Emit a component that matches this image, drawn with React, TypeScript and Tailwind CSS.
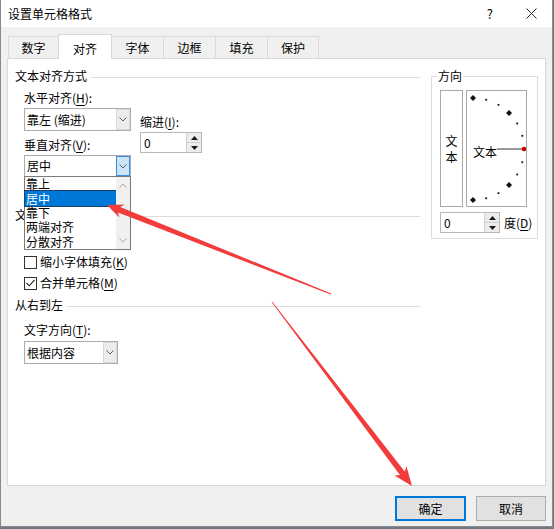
import React from "react";

type Pt = [number, number];

function arrowPoints(tail: Pt, tip: Pt, w0: number, w1: number, headLen: number, headW: number) {
  const dx = tip[0] - tail[0];
  const dy = tip[1] - tail[1];
  const len = Math.hypot(dx, dy);
  const ux = dx / len;
  const uy = dy / len;
  const nx = -uy;
  const ny = ux;
  const bx = tip[0] - ux * headLen;
  const by = tip[1] - uy * headLen;
  const sx = bx + ux * 3;
  const sy = by + uy * 3;
  const pts: Pt[] = [
    [tail[0] + (nx * w0) / 2, tail[1] + (ny * w0) / 2],
    [sx + (nx * w1) / 2, sy + (ny * w1) / 2],
    [bx + (nx * headW) / 2, by + (ny * headW) / 2],
    tip,
    [bx - (nx * headW) / 2, by - (ny * headW) / 2],
    [sx - (nx * w1) / 2, sy - (ny * w1) / 2],
    [tail[0] - (nx * w0) / 2, tail[1] - (ny * w0) / 2],
  ];
  return pts.map((p) => `${p[0].toFixed(1)},${p[1].toFixed(1)}`).join(" ");
}

function U({ children }: { children: React.ReactNode }) {
  return <span className="underline underline-offset-2">{children}</span>;
}

function Chevron({ up = false }: { up?: boolean }) {
  return (
    <svg width="8" height="5" viewBox="0 0 8 5" className={up ? "rotate-180" : ""}>
      <polyline points="0.5,0.5 4,4 7.5,0.5" fill="none" stroke="#606060" strokeWidth="1" />
    </svg>
  );
}

function Combo({
  value,
  width,
  height = 23,
  active = false,
  children,
}: {
  value: string;
  width: string;
  height?: number;
  active?: boolean;
  children?: React.ReactNode;
}) {
  return (
    <div
      className={`relative flex ${width} border border-[#adadad] bg-white ${
        height === 22 ? "h-[22px]" : "h-[23px]"
      }`}
    >
      <span className="flex flex-1 items-center pl-[2px]">{value}</span>
      <div
        className={`flex w-[14px] items-center justify-center border ${
          active ? "border-[#3c8ee0] bg-[#cce4f7]" : "border-[#d9d9d9] bg-[#ececec]"
        }`}
      >
        <Chevron />
      </div>
      {children}
    </div>
  );
}

function Spinner({ width }: { width: string }) {
  return (
    <div className={`flex h-[21px] ${width} border border-[#b9b9b9] bg-white`}>
      <span className="flex flex-1 items-center pl-[3px]">0</span>
      <div className="flex w-[15px] flex-col border-l border-[#d0d0d0]">
        <div className="flex flex-1 items-center justify-center border-b border-[#d0d0d0] bg-[#ececec]">
          <svg width="7" height="4" viewBox="0 0 7 4">
            <polygon points="0,4 3.5,0 7,4" fill="#1a1a1a" />
          </svg>
        </div>
        <div className="flex flex-1 items-center justify-center bg-[#ececec]">
          <svg width="7" height="4" viewBox="0 0 7 4">
            <polygon points="0,0 3.5,4 7,0" fill="#1a1a1a" />
          </svg>
        </div>
      </div>
    </div>
  );
}

function Checkbox({ checked, children }: { checked?: boolean; children: React.ReactNode }) {
  return (
    <div className="flex h-[14px] items-center gap-[3px] pl-[9px]">
      <div className="flex h-[13px] w-[13px] items-center justify-center border border-[#333333] bg-white">
        {checked ? (
          <svg width="9" height="8" viewBox="0 0 9 8">
            <polyline points="0.5,4 3.3,6.8 8.5,0.8" fill="none" stroke="#222" strokeWidth="1.1" />
          </svg>
        ) : null}
      </div>
      <span>{children}</span>
    </div>
  );
}

function SectionHeader({ title, mt }: { title: string; mt: string }) {
  return (
    <div className={`flex h-[14px] items-center gap-[4px] ${mt}`}>
      <span>{title}</span>
      <div className="mt-[3px] h-px flex-1 bg-[#dcdcdc]" />
    </div>
  );
}

const tabs = [
  { label: "数字", w: "w-[51px]" },
  { label: "对齐", w: "w-[54px]", active: true },
  { label: "字体", w: "w-[53px]" },
  { label: "边框", w: "w-[53px]" },
  { label: "填充", w: "w-[53px]" },
  { label: "保护", w: "w-[52px]" },
];

const listItems = ["靠上", "居中", "靠下", "两端对齐", "分散对齐"];

const dots = [90, 75, 60, 45, 30, 15, 0, -15, -30, -45, -60, -75, -90];

export default function App() {
  const cx = 6;
  const cy = 58;
  const r = 51;

  return (
    <div className="relative h-[529px] w-[554px] overflow-hidden bg-[#6f7a84] font-['Noto_Sans_CJK_SC','Noto_Sans',sans-serif] text-[12px] leading-[14px] text-black">
      <div className="flex h-[527px] w-[553px] flex-col border-x border-b border-[#8a8a8a] bg-[#f0f0f0]">
        {/* title bar */}
        <div className="flex h-[27px] items-center bg-white pl-[7px]">
          <span className="flex-1">设置单元格格式</span>
          <span className="mr-[33px] text-[13px]">?</span>
          <svg width="11" height="11" viewBox="0 0 11 11" className="mr-[15px]">
            <path d="M0.5 0.5 L10.5 10.5 M10.5 0.5 L0.5 10.5" stroke="#222" strokeWidth="1" />
          </svg>
        </div>

        <div className="flex flex-1 flex-col px-[6px]">
          {/* tabs */}
          <div className="mt-[7px] flex items-end pl-[1px]">
            {tabs.map((t, i) => (
              <div
                key={t.label}
                className={`flex justify-center border border-b-0 border-[#d9d9d9] ${t.w} ${
                  i > 0 ? "-ml-px" : ""
                } ${
                  t.active
                    ? "relative z-10 -mb-px h-[25px] items-center bg-white pt-[3px]"
                    : "h-[22px] items-center bg-[#f0f0f0] pt-[1px]"
                }`}
              >
                {t.label}
              </div>
            ))}
          </div>

          {/* panel */}
          <div className="flex h-[428px] gap-[11px] border border-[#d9d9d9] bg-white pl-[7px] pt-[10px]">
            {/* left column */}
            <div className="flex w-[405px] flex-col">
              <SectionHeader title="文本对齐方式" mt="mt-0" />
              <div className="flex gap-[9px] pl-[9px]">
                <div className="flex w-[107px] flex-col">
                  <span className="mt-[8px]">
                    水平对齐(<U>H</U>):
                  </span>
                  <div className="mt-[3px]">
                    <Combo value="靠左 (缩进)" width="w-[107px]" />
                  </div>
                  <span className="mt-[7px]">
                    垂直对齐(<U>V</U>):
                  </span>
                  <div className="mt-[3px]">
                    <Combo value="居中" width="w-[107px]" height={22} active>
                      <div className="absolute left-[-1px] top-[20px] z-20 flex h-[74px] w-[107px] border border-[#7a7a7a] bg-white">
                        <div className="flex w-[91px] flex-col">
                          {listItems.map((item, i) => (
                            <div
                              key={item}
                              className={`flex h-[14.7px] items-center pl-[1px] ${
                                i === 1 ? "bg-[#0078d7] text-white outline outline-1 outline-[#1f3f66]" : ""
                              }`}
                            >
                              {item}
                            </div>
                          ))}
                        </div>
                        <div className="flex flex-1 flex-col items-center justify-between bg-[#f0f0f0] py-[6px]">
                          <div className="opacity-50">
                            <Chevron up />
                          </div>
                          <div className="opacity-50">
                            <Chevron />
                          </div>
                        </div>
                      </div>
                    </Combo>
                  </div>
                </div>
                <div className="flex flex-col">
                  <span className="mt-[32px]">
                    缩进(<U>I</U>):
                  </span>
                  <div className="mt-[3px]">
                    <Spinner width="w-[62px]" />
                  </div>
                </div>
              </div>

              <SectionHeader title="文本控制" mt="mt-[31px]" />
              <div className="mt-[33px]">
                <Checkbox>
                  缩小字体填充(<U>K</U>)
                </Checkbox>
              </div>
              <div className="mt-[7px]">
                <Checkbox checked>
                  合并单元格(<U>M</U>)
                </Checkbox>
              </div>

              <SectionHeader title="从右到左" mt="mt-[8px]" />
              <div className="flex flex-col pl-[9px]">
                <span className="mt-[11px]">
                  文字方向(<U>T</U>):
                </span>
                <div className="mt-[4px]">
                  <Combo value="根据内容" width="w-[94px]" />
                </div>
              </div>
            </div>

            {/* orientation group */}
            <div className="relative mt-[7px] h-[163px] w-[107px] border border-[#dcdcdc] pl-[8px] pt-[13px]">
              <span className="absolute left-[5px] top-[-8px] bg-white px-[1px]">方向</span>
              <div className="flex gap-[3px]">
                <div className="flex h-[117px] w-[23px] flex-col items-center justify-center border border-[#a8a8a8] leading-[16px]">
                  <span>文</span>
                  <span>本</span>
                </div>
                <div className="relative h-[117px] w-[61px] border border-[#a8a8a8]">
                  <svg width="59" height="115" viewBox="0 0 59 115" className="absolute left-0 top-0">
                    <line x1="30" y1={cy} x2="56" y2={cy} stroke="#555" strokeWidth="1.2" />
                    {dots.map((a) => {
                      const rad = (a * Math.PI) / 180;
                      const x = cx + r * Math.cos(rad);
                      const y = cy - r * Math.sin(rad);
                      if (a === 0) return <circle key={a} cx={x} cy={y} r="2.3" fill="#c00000" />;
                      const big = Math.abs(a) === 90 || Math.abs(a) === 45;
                      const s = big ? 4.2 : 1.8;
                      return (
                        <rect
                          key={a}
                          x={x - s / 2}
                          y={y - s / 2}
                          width={s}
                          height={s}
                          fill="#111"
                          transform={big ? `rotate(45 ${x} ${y})` : undefined}
                        />
                      );
                    })}
                  </svg>
                  <span className="absolute left-[6px] top-[54px]">文本</span>
                </div>
              </div>
              <div className="mt-[5px] flex items-center gap-[4px]">
                <Spinner width="w-[60px]" />
                <span>
                  度(<U>D</U>)
                </span>
              </div>
            </div>
          </div>

          {/* buttons */}
          <div className="mt-[10px] flex justify-end gap-[10px]">
            <button className="flex h-[25px] w-[71px] items-center justify-center border border-[#0078d7] bg-[#e1e1e1] shadow-[inset_0_0_0_1px_#0078d7]">
              确定
            </button>
            <button className="flex h-[25px] w-[70px] items-center justify-center border border-[#adadad] bg-[#e1e1e1]">
              取消
            </button>
          </div>
        </div>
      </div>

      {/* annotation arrows */}
      <svg width="554" height="529" viewBox="0 0 554 529" className="pointer-events-none absolute left-0 top-0 z-30">
        <polygon points={arrowPoints([331, 294], [107, 205], 1, 6, 16, 14)} fill="#f23c3c" />
        <polygon points={arrowPoints([272, 302], [412, 486], 0.8, 6, 19, 15)} fill="#f23c3c" />
      </svg>
    </div>
  );
}
